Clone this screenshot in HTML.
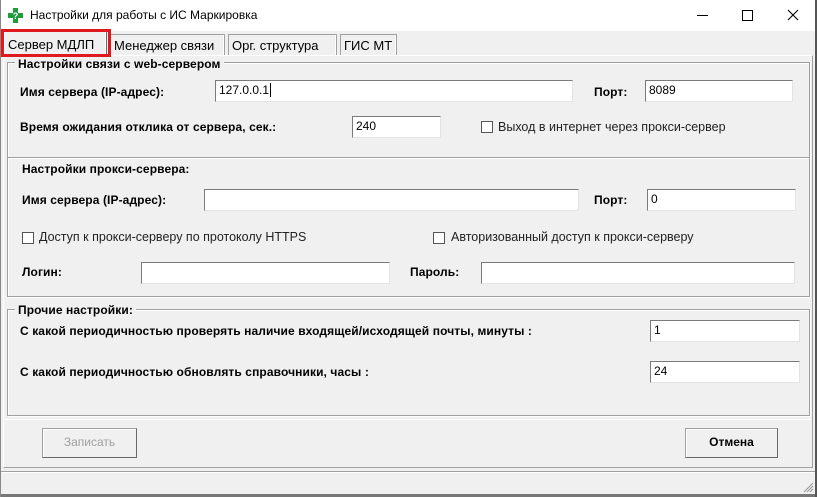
<!DOCTYPE html><html><head><meta charset="utf-8"><style>
*{box-sizing:border-box;margin:0;padding:0}
body{width:817px;height:497px;background:#f0f0f0;position:relative;overflow:hidden;font-family:"Liberation Sans","DejaVu Sans",sans-serif;font-size:11px;color:#000}
.a{position:absolute}
.b{font-weight:bold;font-size:12px;letter-spacing:0.1px}
.in{position:absolute;background:#fff;border:1px solid #e3e3e3;border-top-color:#7a7a7a;border-left-color:#7a7a7a;font-size:12px;padding:2px 0 0 3px}
.fr{position:absolute;border:1px solid #a0a0a0;box-shadow:1px 1px 0 #fff inset,1px 1px 0 #fff}
.lg{position:absolute;background:#f0f0f0;padding:0 3px;font-weight:bold;font-size:12px;letter-spacing:0.1px}
.cb{position:absolute;width:12px;height:12px;border:1px solid #555;background:#fff}
.t{position:absolute;font-size:12.5px;color:#222}
.tab{position:absolute;top:34px;height:21px;border:1px solid #a0a0a0;border-bottom:none;background:#f0f0f0;font-size:13px;padding:3px 0 0 3px;box-shadow:-1px 0 0 #fff inset}
.btn{position:absolute;border:1px solid #a0a0a0;border-right-color:#696969;border-bottom-color:#696969;box-shadow:1px 1px 0 #fff inset;background:#f0f0f0;text-align:center;font-size:12px;line-height:27px}
</style></head><body>
<div class="a" style="left:0;top:0;width:817px;height:31px;background:#fff"></div>
<svg class="a" style="left:8px;top:8px" width="15" height="15" viewBox="0 0 15 15"><path d="M5 0h5v5h5v5h-5v5h-5v-5h-5v-5h5z" fill="#1e9b3a"/><text x="7.5" y="11" font-size="9" text-anchor="middle" fill="#fff" font-weight="bold" font-family="Liberation Sans">?</text></svg>
<div class="a" style="left:30px;top:8px;font-size:12px">Настройки для работы с ИС Маркировка</div>
<div class="a" style="left:697px;top:15px;width:11px;height:1px;background:#000"></div>
<div class="a" style="left:742px;top:10px;width:11px;height:11px;border:1px solid #000"></div>
<svg class="a" style="left:787px;top:9px" width="12" height="12"><path d="M1 1L11 11M11 1L1 11" stroke="#000" stroke-width="1.1"/></svg>
<div class="a" style="left:815px;top:0;width:2px;height:497px;background:#555"></div>
<div class="a" style="left:0;top:0;width:1px;height:497px;background:#888"></div>

<div class="a" style="left:3px;top:55px;width:810px;height:413px;border:1px solid #a0a0a0;border-top-color:#fff;border-left-color:#fff"></div>
<div class="tab" style="left:110px;width:115px">Менеджер связи</div>
<div class="tab" style="left:228px;width:109px">Орг. структура</div>
<div class="tab" style="left:340px;width:57px">ГИС МТ</div>
<div class="tab" style="left:4px;top:31px;height:25px;width:103px;padding-top:5px;border-color:#fff #696969 #fff #fff">Сервер МДЛП</div>
<div class="a" style="left:1px;top:29px;width:110px;height:28px;border:3px solid #e0191e"></div>

<div class="fr" style="left:7px;top:62px;width:803px;height:96px"></div>
<div class="lg" style="left:15px;top:57px">Настройки связи с web-сервером</div>
<div class="a b" style="left:20px;top:85px">Имя сервера (IP-адрес):</div>
<div class="in" style="left:215px;top:80px;width:358px;height:22px">127.0.0.1<span style="border-left:1px solid #000;margin-left:1px"></span></div>
<div class="a b" style="left:594px;top:85px">Порт:</div>
<div class="in" style="left:645px;top:80px;width:148px;height:22px">8089</div>
<div class="a b" style="left:20px;top:120px">Время ожидания отклика от сервера, сек.:</div>
<div class="in" style="left:352px;top:116px;width:89px;height:22px">240</div>
<div class="cb" style="left:481px;top:121px"></div>
<div class="t" style="left:498px;top:120px">Выход в интернет через прокси-сервер</div>

<div class="fr" style="left:7px;top:157px;width:803px;height:140px"></div>
<div class="a b" style="left:22px;top:162px">Настройки прокси-сервера:</div>
<div class="a b" style="left:22px;top:193px">Имя сервера (IP-адрес):</div>
<div class="in" style="left:204px;top:189px;width:375px;height:22px"></div>
<div class="a b" style="left:594px;top:193px">Порт:</div>
<div class="in" style="left:647px;top:189px;width:149px;height:22px">0</div>
<div class="cb" style="left:22px;top:232px"></div>
<div class="t" style="left:39px;top:230px">Доступ к прокси-серверу по протоколу HTTPS</div>
<div class="cb" style="left:433px;top:232px"></div>
<div class="t" style="left:451px;top:230px">Авторизованный доступ к прокси-серверу</div>
<div class="a b" style="left:22px;top:265px">Логин:</div>
<div class="in" style="left:141px;top:262px;width:249px;height:22px"></div>
<div class="a b" style="left:410px;top:265px">Пароль:</div>
<div class="in" style="left:481px;top:262px;width:314px;height:22px"></div>

<div class="fr" style="left:7px;top:309px;width:803px;height:107px"></div>
<div class="lg" style="left:15px;top:303px">Прочие настройки:</div>
<div class="a b" style="left:20px;top:324px">С какой периодичностью проверять наличие входящей/исходящей почты, минуты :</div>
<div class="in" style="left:650px;top:320px;width:150px;height:22px">1</div>
<div class="a b" style="left:20px;top:365px">С какой периодичностью обновлять справочники, часы :</div>
<div class="in" style="left:650px;top:361px;width:150px;height:22px">24</div>

<div class="a" style="left:5px;top:419px;width:806px;height:1px;background:#a0a0a0;border-bottom:1px solid #fff"></div>
<div class="btn" style="left:42px;top:428px;width:95px;height:30px;color:#a0a0a0">Записать</div>
<div class="btn" style="left:685px;top:428px;width:93px;height:30px;font-weight:bold">Отмена</div>

<div class="a" style="left:1px;top:471px;width:814px;height:1px;background:#a0a0a0"></div>
<div class="a" style="left:1px;top:472px;width:814px;height:1px;background:#fff"></div>
<div class="a" style="left:1px;top:494px;width:814px;height:3px;background:#777"></div>
<svg class="a" style="left:803px;top:482px" width="11" height="11"><path d="M10 1L1 10M10 4L4 10M10 7L7 10" stroke="#999"/></svg>
</body></html>
